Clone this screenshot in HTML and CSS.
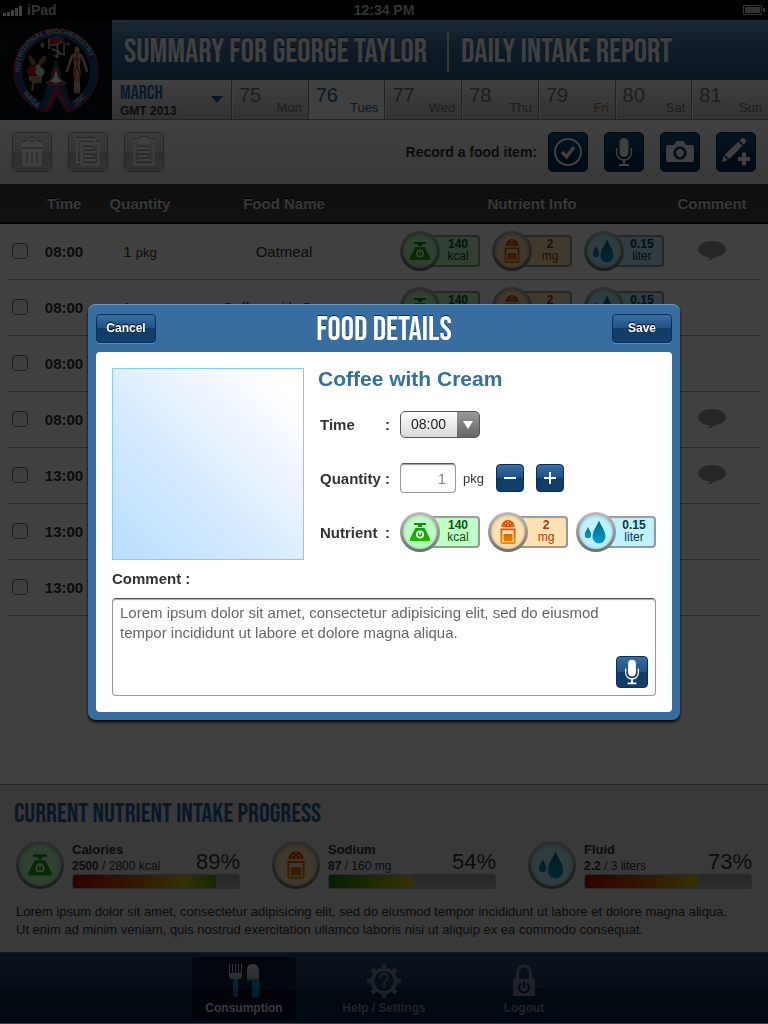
FILE: index.html
```html
<!DOCTYPE html>
<html lang="en">
<head>
<meta charset="utf-8">
<meta name="viewport" content="width=device-width, initial-scale=1">
<title>Daily Intake Report</title>
<link rel="stylesheet" href="styles.css">
</head>
<body>
<svg class="sprite" aria-hidden="true">
  <defs>
    <linearGradient id="g-green" x1="0" y1="0" x2="0" y2="1"><stop offset="0" stop-color="#0a8f0a"/><stop offset="1" stop-color="#1cb800"/></linearGradient>
    <linearGradient id="g-orange" x1="0" y1="0" x2="0" y2="1"><stop offset="0" stop-color="#e04e00"/><stop offset="1" stop-color="#f08c00"/></linearGradient>
    <linearGradient id="g-blue" x1="0" y1="0" x2="0" y2="1"><stop offset="0" stop-color="#006a86"/><stop offset="1" stop-color="#009bd0"/></linearGradient>
    <linearGradient id="g-cutlery" x1="0" y1="0" x2="0" y2="1"><stop offset="0" stop-color="#d8dde2"/><stop offset=".44" stop-color="#a8b4c0"/><stop offset=".46" stop-color="#1494bc"/><stop offset="1" stop-color="#0b7fb0"/></linearGradient>
  </defs>
  <symbol id="scale" viewBox="0 0 24 24">
    <path fill="url(#g-green)" d="M6 3h12v2h-4v2h-4V5H6zM7.500 8h9l5.500 10.500V21H2v-2.500z"/>
    <circle cx="12" cy="14.500" r="4" fill="#e8ffe8"/>
    <circle cx="12" cy="14.500" r="2.200" fill="#12a004"/><path fill="#e8ffe8" d="M11.300 11.500h1.400v3.500h-1.400z"/>
  </symbol>
  <symbol id="shaker" viewBox="0 0 24 26">
    <path fill="#e04e00" d="M5.500 8C5.500 4 8 1 12 1s6.500 3 6.500 7z"/>
    <g fill="#ffe2b4"><circle cx="12" cy="3" r=".8"/><circle cx="9.500" cy="4.600" r=".7"/><circle cx="14.500" cy="4.600" r=".7"/><circle cx="12" cy="6.200" r=".7"/><circle cx="8" cy="6.600" r=".6"/><circle cx="16" cy="6.600" r=".6"/></g>
    <path fill="url(#g-orange)" fill-rule="evenodd" d="M4.500 9.500h15V23.500a1.500 1.500 0 0 1-1.500 1.500H6a1.500 1.500 0 0 1-1.500-1.500zM6.300 11.300v11.900h11.400V11.300zM7.500 15h9v7h-9z"/>
  </symbol>
  <symbol id="drops" viewBox="0 0 24 24">
    <path fill="url(#g-blue)" d="M15 .500c2 5.500 6.500 10 6.500 16.500a6.500 6.500 0 0 1-13 0C8.500 10.500 13 6 15 .500z"/>
    <path fill="url(#g-blue)" d="M4 7c1 3 3.200 4.800 3.200 8a3.200 3.200 0 0 1-6.400 0C.8 11.800 3 10 4 7z"/>
  </symbol>
  <symbol id="mic" viewBox="0 0 20 30">
    <rect x="5.500" y="1" width="9" height="19" rx="4.500" fill="#fff"/>
    <path fill="none" stroke="#fff" stroke-width="1.500" d="M2.700 11v5c0 4 3 7 7.300 7s7.300-3 7.300-7v-5"/>
    <path fill="#fff" d="M9 23h2v4h4v2H5v-2h4z"/>
  </symbol>
  <symbol id="bubble" viewBox="0 0 28 22">
    <path fill="#999" d="M14 1c7.700 0 14 3.500 14 8.200 0 4-4.600 7.200-10.500 7.900C15 19 12 20.500 8.500 21c1.800-1.200 2.800-2.600 3-3.800C5 16.700 0 13.500 0 9.200 0 4.500 6.300 1 14 1z"/>
  </symbol>
</svg>

<div class="page">
  <div class="status">
    <span class="carrier">
      <svg width="20" height="11" viewBox="0 0 20 11" aria-hidden="true"><path fill="#fff" d="M0 8h3v3H0zM4 7h3v4H4zM8 5h3v6H8zM12 3h3v8h-3zM16 1h3v10h-3z"/></svg>
      iPad
    </span>
    <span class="clock">12:34 PM</span>
    <span class="battery">
      <svg width="22" height="10" viewBox="0 0 22 10" aria-hidden="true"><path fill="none" stroke="#ccc" d="M.500.500h18v9H.500z"/><path fill="#ccc" d="M2 2h15v6H2zM20 3h2v4h-2z"/></svg>
    </span>
  </div>

  <header class="top">
    <svg class="logo" viewBox="0 0 112 100" role="img" aria-label="Nutritional Biochemistry, NASA JSC">
      <rect width="112" height="100" fill="#0a0f14"/>
      <g fill="#7d8a94"><circle cx="8" cy="9" r=".6"/><circle cx="22" cy="6" r=".5"/><circle cx="96" cy="12" r=".6"/><circle cx="103" cy="30" r=".5"/><circle cx="6" cy="40" r=".5"/><circle cx="9" cy="78" r=".6"/><circle cx="20" cy="92" r=".5"/><circle cx="90" cy="92" r=".6"/><circle cx="104" cy="75" r=".6"/><circle cx="81" cy="5" r=".5"/><circle cx="107" cy="54" r=".5"/><circle cx="36" cy="11" r=".4"/><circle cx="5" cy="22" r=".4"/></g>
      <circle cx="56" cy="51" r="42" fill="#1d4a80" stroke="#b01c28" stroke-width="1.500"/>
      <circle cx="56" cy="51" r="34" fill="#000"/>
      <path fill="#0a0f14" d="M52 72h10l9 24H42z"/>
      <path fill="#1d4a80" d="M48 64h17l7 24H40z"/>
      <path fill="#0a0f14" d="M57 76l9 20H48z"/>
      <path fill="none" stroke="#c01c28" stroke-width="3.500" d="M45.500 92l11.500-24 11.500 24"/>
      <path fill="#c01c28" stroke="#3a6aa4" stroke-width="1.500" d="M56 42l3 10 1 6 6 5-5 2h-10l-5-2 6-5 1-6z"/>
      <path fill="#fff" d="M56 50l2 7 4 5h-4l-2 2-2-2h-4l4-5z"/>
      <path fill="#d01c24" d="M48 19c5-3 11-3 16 0v1c-3 6-12 6-16 0z"/>
      <path fill="none" stroke="#ccc" stroke-width="1.500" d="M49 19v10M49 25h8l1 9h5M57 25l5-4M64 22v14M52 29l9 4"/>
      <g stroke="#bbb" stroke-width="1"><path d="M40 25h5M42.500 22v6M41 23.500l3 3M44 23.500l-3 3M54 36h5M56.500 33.500v5M55 34.500l3 3M58 34.500l-3 3M66 24h4M68 22v4"/></g>
      <g fill="#8a7440"><ellipse cx="32" cy="41" rx="2.500" ry="6" transform="rotate(-28 32 41)"/><ellipse cx="42" cy="41" rx="2.500" ry="6" transform="rotate(35 42 41)"/></g>
      <path fill="#b08a50" d="M29 56h13v7H34v7l-3 1 1-9-3-2z"/>
      <circle cx="32" cy="51" r="5" fill="#c81824"/><circle cx="40" cy="52" r="4.500" fill="#d8d8c0"/><circle cx="38" cy="47" r="2.500" fill="#d8d8c0"/>
      <g fill="none" stroke="#d0a888" stroke-linecap="round" stroke-linejoin="round"><path stroke-width="2.500" d="M67 51l5-15 3-2h4l3 2 5 15"/><path stroke-width="3" d="M75.500 54v18M78.500 54v18"/></g>
      <path fill="#d0a888" d="M73 34h8l-1 12 1 9h-8l1-9z"/><ellipse cx="77" cy="30" rx="2.500" ry="3.500" fill="#d0a888"/>
      <path stroke="#c01c24" stroke-width="1" fill="none" d="M77 33v13M75 38l2 3 2-3M77 46l-2 5v10M77 46l2 5v10"/>
      <path id="arc-top" fill="none" d="M21 58a36 36 0 1 1 70 0"/>
      <g class="patch-text"><text><textPath href="#arc-top" startOffset="6">NUTRITIONAL BIOCHEMISTRY</textPath></text>
      <text transform="translate(23 74) rotate(46)">NASA</text><text transform="translate(76 86) rotate(-43)">JSC</text></g>
    </svg>
    <div class="top-main">
      <h1 class="title display"><span>Summary for George Taylor</span><span class="title-second">Daily Intake Report</span></h1>
      <nav class="dates">
        <button class="month" type="button">
          <span><span class="month-name display">March</span><span class="month-year">GMT 2013</span></span>
          <svg width="12" height="7" viewBox="0 0 12 7" aria-hidden="true"><path fill="#1d5b92" d="M0 0h12L6 7z"/></svg>
        </button>
        <a class="day" href="#d75"><b>75</b><span>Mon</span></a>
        <a class="day day-on" href="#d76"><b>76</b><span>Tues</span></a>
        <a class="day" href="#d77"><b>77</b><span>Wed</span></a>
        <a class="day" href="#d78"><b>78</b><span>Thu</span></a>
        <a class="day" href="#d79"><b>79</b><span>Fri</span></a>
        <a class="day" href="#d80"><b>80</b><span>Sat</span></a>
        <a class="day" href="#d81"><b>81</b><span>Sun</span></a>
      </nav>
    </div>
  </header>

  <div class="toolbar">
    <button class="tool tool-off" type="button" aria-label="Delete"><svg width="24" height="30" viewBox="0 0 24 30"><path fill="none" stroke="#fff" stroke-width="1.800" d="M8 5q0-3 2-3h4q2 0 2 3"/><path fill="#fff" d="M4 4.500h16q4 1 4 5.500H0q0-4.500 4-5.500z"/><path fill="#fff" fill-rule="evenodd" d="M2 11.500h20V28q0 1-1 1H3q-1 0-1-1zM6 15v11h2V15zM11 15v11h2V15zM16 15v11h2V15z"/></svg></button>
    <button class="tool tool-off" type="button" aria-label="Copy"><svg width="26" height="30" viewBox="0 0 26 30"><path fill="none" stroke="#fff" stroke-width="2" d="M5 25H2V2h18v3"/><path fill="none" stroke="#fff" stroke-width="2.500" d="M6.500 6.500h17v21h-17z"/><path stroke="#fff" stroke-width="2" d="M9 11h7M9 15h12M9 19h9M9 23h12"/></svg></button>
    <button class="tool tool-off" type="button" aria-label="Paste"><svg width="24" height="30" viewBox="0 0 24 30"><path fill="none" stroke="#fff" stroke-width="2.500" d="M5 3.500H2.500v24h19v-24H19"/><path fill="#fff" d="M6 2h3V0h6v2h3v5H6z"/><path stroke="#fff" stroke-width="2" d="M6 11h9M6 15h12M6 19h9M6 23h12"/></svg></button>
    <span class="record">Record a food item:</span>
    <button class="tool" type="button" aria-label="Check off"><svg width="30" height="30" viewBox="0 0 30 30"><circle cx="15" cy="15" r="13" fill="none" stroke="#fff" stroke-width="2"/><path fill="none" stroke="#fff" stroke-width="3.500" d="M9 15l4.500 4.500L21 10"/></svg></button>
    <button class="tool" type="button" aria-label="Record audio"><svg width="20" height="30"><use href="#mic"/></svg></button>
    <button class="tool" type="button" aria-label="Take photo"><svg width="28" height="22" viewBox="0 0 28 22"><path fill="#fff" fill-rule="evenodd" d="M2 4h6l2-4h8l2 4h6a2 2 0 0 1 2 2v13a2 2 0 0 1-2 2H2a2 2 0 0 1-2-2V6a2 2 0 0 1 2-2zM14 5.500a6.500 6.500 0 1 0 .01 0zM14 8a4 4 0 1 1-.01 0z"/></svg></button>
    <button class="tool" type="button" aria-label="Write entry"><svg width="28" height="30" viewBox="0 0 28 30"><path fill="#fff" d="M17.500 3.500L19 2q2-2 4 0t0 4l-1.500 1.500zM16.300 4.700l4 4L7.500 22l-5-4zM1.500 19l4.500 4-6 2zM20 15.500h4v4.500h4v4h-4v4.500h-4V24h-4v-4h4z"/></svg></button>
  </div>

  <main class="log">
    <table class="entries">
      <colgroup><col class="c-check"><col class="c-time"><col class="c-qty"><col class="c-food"><col class="c-info"><col class="c-note"></colgroup>
      <thead><tr><td></td><th class="time">Time</th><th>Quantity</th><th>Food Name</th><th>Nutrient Info</th><th class="note">Comment</th></tr></thead>
      <tbody>
        <tr><td class="check"><input type="checkbox" aria-label="Select 08:00 Oatmeal"></td><td class="time">08:00</td><td>1 <small>pkg</small></td><td>Oatmeal</td>
          <td><div class="pills">
            <span class="pill kcal"><span class="disc"><svg width="24" height="24"><use href="#scale"/></svg></span><span class="amount"><b>140</b><span>kcal</span></span></span>
            <span class="pill salt"><span class="disc"><svg width="24" height="26"><use href="#shaker"/></svg></span><span class="amount"><b>2</b><span>mg</span></span></span>
            <span class="pill water"><span class="disc"><svg width="24" height="24"><use href="#drops"/></svg></span><span class="amount"><b>0.15</b><span>liter</span></span></span>
          </div></td><td class="note"><svg width="28" height="22"><use href="#bubble"/></svg></td></tr>
        <tr><td class="check"><input type="checkbox" aria-label="Select 08:00 Coffee with Cream"></td><td class="time">08:00</td><td>1 <small>pkg</small></td><td>Coffee with Cream</td>
          <td><div class="pills">
            <span class="pill kcal"><span class="disc"><svg width="24" height="24"><use href="#scale"/></svg></span><span class="amount"><b>140</b></span></span>
            <span class="pill salt"><span class="disc"><svg width="24" height="26"><use href="#shaker"/></svg></span><span class="amount"><b>2</b></span></span>
            <span class="pill water"><span class="disc"><svg width="24" height="24"><use href="#drops"/></svg></span><span class="amount"><b>0.15</b></span></span>
          </div></td><td></td></tr>
        <tr><td class="check"><input type="checkbox" aria-label="Select entry 3"></td><td class="time">08:00</td><td></td><td></td><td></td><td></td></tr>
        <tr><td class="check"><input type="checkbox" aria-label="Select entry 4"></td><td class="time">08:00</td><td></td><td></td><td></td><td class="note"><svg width="28" height="22"><use href="#bubble"/></svg></td></tr>
        <tr><td class="check"><input type="checkbox" aria-label="Select entry 5"></td><td class="time">13:00</td><td></td><td></td><td></td><td class="note"><svg width="28" height="22"><use href="#bubble"/></svg></td></tr>
        <tr><td class="check"><input type="checkbox" aria-label="Select entry 6"></td><td class="time">13:00</td><td></td><td></td><td></td><td></td></tr>
        <tr><td class="check"><input type="checkbox" aria-label="Select entry 7"></td><td class="time">13:00</td><td></td><td></td><td></td><td></td></tr>
      </tbody>
    </table>
  </main>

  <section class="progress">
    <h2 class="display">Current Nutrient Intake Progress</h2>
    <div class="meters">
      <div class="meter kcal"><span class="disc disc-lg"><svg width="28" height="28"><use href="#scale"/></svg></span>
        <div class="meter-body"><div class="meter-text"><div><b class="meter-name">Calories</b><span><b>2500</b> / 2800 kcal</span></div><span class="percent">89%</span></div>
        <div class="track"><div class="fill fill-warm" style="width:86%"></div></div></div></div>
      <div class="meter salt"><span class="disc disc-lg"><svg width="28" height="30"><use href="#shaker"/></svg></span>
        <div class="meter-body"><div class="meter-text"><div><b class="meter-name">Sodium</b><span><b>87</b> / 160 mg</span></div><span class="percent">54%</span></div>
        <div class="track"><div class="fill fill-cool" style="width:50%"></div></div></div></div>
      <div class="meter water"><span class="disc disc-lg"><svg width="28" height="28"><use href="#drops"/></svg></span>
        <div class="meter-body"><div class="meter-text"><div><b class="meter-name">Fluid</b><span><b>2.2</b> / 3 liters</span></div><span class="percent">73%</span></div>
        <div class="track"><div class="fill fill-warm" style="width:68%"></div></div></div></div>
    </div>
    <p>Lorem ipsum dolor sit amet, consectetur adipisicing elit, sed do eiusmod tempor incididunt ut labore et dolore magna aliqua. Ut enim ad minim veniam, quis nostrud exercitation ullamco laboris nisi ut aliquip ex ea commodo consequat.</p>
  </section>

  <nav class="tabs">
    <a class="tab tab-on" href="#consumption"><svg width="30" height="34" viewBox="0 0 30 34" aria-hidden="true"><path fill="url(#g-cutlery)" d="M0 0h1v9h2V0h1v9h2V0h1v9h2V0h1v9h2V0h1v13q0 2-2 2H9v16q0 2-2.500 2T4 31V15H2q-2 0-2-2z"/><path fill="url(#g-cutlery)" d="M18 17V6q0-6 5-6 7 0 7 7v24q0 2-3.500 2T23 31V17z"/></svg>Consumption</a>
    <a class="tab" href="#help"><svg width="34" height="34" viewBox="0 0 34 34" aria-hidden="true"><circle cx="17" cy="17" r="11.500" fill="none" stroke="#7c8ba0" stroke-width="3.500"/><g stroke="#7c8ba0" stroke-width="4.500"><path d="M17 0v5M17 29v5M0 17h5M29 17h5M5 5l4 4M25 25l4 4M29 5l-4 4M9 25l-4 4"/></g><path fill="none" stroke="#7c8ba0" stroke-width="2" d="M13 14q0-4 4-4t4 3.500q0 2-2.500 3.500-1.500 1-1.500 3v1"/><path fill="#7c8ba0" d="M16 22.500h2.200v2.200H16z"/></svg>Help / Settings</a>
    <a class="tab" href="#logout"><svg width="24" height="34" viewBox="0 0 24 34" aria-hidden="true"><path fill="none" stroke="#7c8ba0" stroke-width="3" d="M5.500 16V8.500a6.500 6.500 0 0 1 13 0V16"/><path fill="#7c8ba0" d="M2 15h20q1 0 1 1v15q0 1-1 1H2q-1 0-1-1V16q0-1 1-1z"/><path fill="none" stroke="#12263e" stroke-width="2" d="M9 19.500a5 5 0 1 0 6 0M12 17.500v6"/></svg>Logout</a>
  </nav>
</div>

<div class="overlay">
  <form class="dialog" role="dialog" aria-labelledby="dialog-title">
    <div class="dialog-head">
      <button class="btn" type="button">Cancel</button>
      <h2 class="display" id="dialog-title">Food Details</h2>
      <button class="btn" type="button">Save</button>
    </div>
    <div class="dialog-body">
      <div class="details">
        <div class="photo"></div>
        <div class="fields">
          <h3>Coffee with Cream</h3>
          <div class="field"><label for="time"><span>Time</span><span>:</span></label>
            <span class="select"><select id="time"><option>08:00</option></select></span></div>
          <div class="field"><label for="qty"><span>Quantity</span><span>:</span></label>
            <input class="qty" id="qty" type="text" value="1"><span class="unit">pkg</span>
            <button class="btn step" type="button" aria-label="Decrease"><svg width="14" height="14"><path fill="#fff" d="M1 6h12v2H1z"/></svg></button>
            <button class="btn step" type="button" aria-label="Increase"><svg width="14" height="14"><path fill="#fff" d="M1 6h5V1h2v5h5v2H8v5H6V8H1z"/></svg></button></div>
          <div class="field"><div class="label"><span>Nutrient</span><span>:</span></div>
            <div class="pills pills-tight">
              <span class="pill kcal"><span class="disc"><svg width="24" height="24"><use href="#scale"/></svg></span><span class="amount"><b>140</b><span>kcal</span></span></span>
              <span class="pill salt"><span class="disc"><svg width="24" height="26"><use href="#shaker"/></svg></span><span class="amount"><b>2</b><span>mg</span></span></span>
              <span class="pill water"><span class="disc"><svg width="24" height="24"><use href="#drops"/></svg></span><span class="amount"><b>0.15</b><span>liter</span></span></span>
            </div></div>
        </div>
      </div>
      <label class="comment-label" for="comment">Comment :</label>
      <div class="comment"><textarea id="comment">Lorem ipsum dolor sit amet, consectetur adipisicing elit, sed do eiusmod tempor incididunt ut labore et dolore magna aliqua.</textarea>
        <button class="btn mic" type="button" aria-label="Dictate comment"><svg width="18" height="26"><use href="#mic"/></svg></button></div>
    </div>
  </form>
</div>
</body>
</html>
```

FILE: styles.css
```css
* { box-sizing: border-box; }

body {
  margin: 0;
  font-family: "Liberation Sans", Arial, sans-serif;
  color: #333;
  background: #fff;
}

button, input, select, textarea { font: inherit; color: inherit; margin: 0; }
button { padding: 0; cursor: pointer; }
a { color: inherit; text-decoration: none; }
h1, h2, h3, p { margin: 0; }
svg { display: block; }
.sprite { position: absolute; width: 0; height: 0; }

.display {
  font-family: "Bebas Neue", "Liberation Sans Narrow", "Roboto Condensed", "Liberation Sans", sans-serif;
  font-weight: normal;
  text-transform: uppercase;
}

.page { min-height: 100vh; display: flex; flex-direction: column; }

/* Status bar */
.status {
  height: 20px;
  padding: 0 3px;
  display: grid;
  grid-template-columns: 1fr auto 1fr;
  align-items: center;
  background: #000;
  color: #ccc;
  font-size: 14px;
  font-weight: bold;
}
.carrier { display: flex; align-items: center; gap: 4px; }
.battery { justify-self: end; }

/* Header */
.top { display: flex; height: 100px; }
.logo { width: 112px; flex: none; }
.patch-text { font-size: 7px; font-weight: bold; fill: #b8c4d0; }
.top-main { flex: 1; min-width: 0; display: flex; flex-direction: column; }
.title {
  height: 60px;
  padding: 2px 12px 0;
  display: flex;
  align-items: center;
  background: linear-gradient(#8ab0cf, #6594bc 2px, #3b6e9f 50%, #2b567f);
  border-top: 1px solid #7da8cc;
  color: #fff;
  font-size: 33px;
  white-space: nowrap;
  text-shadow: 0 -1px 1px #0d3360;
}
.title-second { margin-left: 20px; padding-left: 12px; border-left: 2px solid #ddd; line-height: 40px; }
.dates { flex: 1; display: flex; border-bottom: 1px solid #888; }
.month, .day {
  background: linear-gradient(#fff, #c4c4c4);
  border: 0;
  border-right: 1px solid #888;
}
.month {
  width: 120px;
  padding: 0 8px;
  display: flex;
  align-items: center;
  justify-content: space-between;
  text-align: left;
}
.month-name { display: block; color: #2a6aa8; font-size: 20px; line-height: 22px; }
.month-year { display: block; font-size: 12px; line-height: 14px; font-weight: bold; }
.day {
  flex: 1;
  padding: 4px 6px;
  display: flex;
  justify-content: space-between;
  color: #777;
  border-left: 1px solid #fff;
}
.day:last-child { border-right: 0; }
.day b { font-weight: normal; font-size: 20px; line-height: 22px; }
.day span { align-self: flex-end; font-size: 13px; line-height: 14px; }
.day-on { background: #fff; color: #2a6496; }

/* Toolbar */
.toolbar {
  height: 64px;
  padding: 0 12px;
  display: flex;
  align-items: center;
  gap: 16px;
  background: linear-gradient(#fff, #e0e0e0);
}
.tool {
  width: 40px;
  height: 40px;
  display: flex;
  align-items: center;
  justify-content: center;
  border: 1px solid #00284e;
  border-radius: 5px;
  background: linear-gradient(#1d4c7a, #0b3c68 50%, #002d54 50%, #003058);
}
.tool-off { border-color: #999; background: linear-gradient(#e8e8e8, #d0d0d0 50%, #bcbcbc 50%, #c8c8c8); }
.tool-off svg { filter: drop-shadow(0 -1px 0 #999); }
.record { margin-left: auto; margin-right: -5px; font-size: 14px; font-weight: bold; }

/* Entries */
.log { flex: 1; }
.entries { width: 100%; border-collapse: collapse; table-layout: fixed; text-align: center; font-size: 15px; }
.c-check { width: 40px; }
.c-time { width: 64px; }
.c-qty { width: 72px; }
.c-info { width: 280px; }
.c-note { width: 96px; }
.entries th, .entries td { padding: 0 0 2px; }
.entries thead tr {
  height: 40px;
  background: linear-gradient(#3c3c3c, #484848);
  color: #ddd;
  box-shadow: inset 0 -2px 0 #000;
  text-shadow: 0 -1px 0 #000;
}
.entries tbody tr {
  height: 56px;
  background: linear-gradient(#aaa, #aaa) center bottom / calc(100% - 16px) 1px no-repeat;
}
.entries small { font-size: 13px; }
.entries .time { padding-right: 16px; font-weight: bold; }
.entries .note { padding-right: 16px; }
.note svg { margin: 0 auto; }
.check input {
  appearance: none;
  display: block;
  width: 16px;
  height: 16px;
  margin-left: 12px;
  border: 1px solid #777;
  border-radius: 4px;
  background: linear-gradient(#eee, #fff);
}

/* Nutrient pills */
.pills { display: flex; justify-content: center; gap: 12px; }
.pills-tight { gap: 8px; }
.pill { display: flex; align-items: center; width: 80px; height: 40px; text-align: center; isolation: isolate; }
.disc {
  flex: none;
  z-index: 1;
  width: 40px;
  height: 40px;
  display: flex;
  align-items: center;
  justify-content: center;
  border: 3px solid transparent;
  border-radius: 50%;
  background: radial-gradient(var(--tint) 56%, var(--edge) 76%) padding-box, linear-gradient(#bdbdbd, #707070) border-box;
}
.disc-lg { width: 48px; height: 48px; }
.amount {
  flex: 1;
  height: 32px;
  margin-left: -8px;
  padding: 2px 0 0 6px;
  border: 1px solid #999;
  border-width: 1px 2px 2px 0;
  border-radius: 0 4px 4px 0;
  background: var(--tint);
  box-shadow: inset 0 1px 1px #999;
  color: var(--ink);
  font-size: 12px;
  line-height: 12px;
}
.amount > * { display: block; }
.kcal { --tint: #bfffc4; --edge: #9cdca4; --ink: #0c5020; }
.salt { --tint: #ffe2b4; --edge: #e4c08c; --ink: #a03c10; }
.water { --tint: #c0f1ff; --edge: #98d0e4; --ink: #0c3448; }

/* Progress */
.progress {
  height: 168px;
  padding: 17px 16px 0;
  border-top: 1px solid #999;
  background: #e2e2e2;
  isolation: isolate;
}
.progress h2 { margin-left: -2px; color: #2a6098; font-size: 27px; line-height: 24px; }
.meters { display: grid; grid-template-columns: repeat(3, 1fr); gap: 32px; margin-top: 15px; }
.meter { display: flex; align-items: center; gap: 8px; }
.meter-body { flex: 1; min-width: 0; }
.meter-text { display: flex; align-items: flex-end; justify-content: space-between; font-size: 12px; line-height: 16px; white-space: nowrap; }
.meter-name { display: block; font-size: 13px; }
.percent { font-size: 22px; line-height: 24px; }
.track { height: 15px; border: 1px solid #aaa; border-radius: 3px; background: linear-gradient(#999, #bbb); overflow: hidden; }
.fill { height: 100%; }
.fill-warm { background: linear-gradient(90deg, #c40000, #d07000 71px, #d0c800 110px, #3c9c00 150px); }
.fill-cool { background: linear-gradient(90deg, #148000, #d0c800 82px); }
.progress p { margin-top: 14px; padding-right: 12px; font-size: 13px; line-height: 18px; }

/* Tabs */
.tabs {
  height: 72px;
  display: flex;
  align-items: center;
  justify-content: center;
  gap: 36px;
  border-top: 1px solid #3b6ea0;
  background: linear-gradient(#2a4c6c, #183c60 50%, #042440 50%, #042c50);
}
.tab {
  width: 104px;
  height: 64px;
  padding-top: 7px;
  display: flex;
  flex-direction: column;
  align-items: center;
  gap: 3px;
  border-radius: 4px;
  color: #7c8ba0;
  font-size: 12px;
  line-height: 14px;
  font-weight: bold;
}
.tab-on { color: #ddd; background: linear-gradient(#0c1c34, #10203c 50%, #000c24 50%); }

/* Dialog */
.overlay {
  position: fixed;
  z-index: 10;
  inset: 0;
  display: flex;
  align-items: center;
  justify-content: center;
  padding: 16px;
  background: rgba(0, 0, 0, .75);
  box-shadow: inset 0 -1px 0 #1c4a80;
}
.dialog {
  width: 100%;
  max-width: 592px;
  padding: 0 8px 8px;
  border-radius: 8px;
  background: #386d9f;
  box-shadow: inset 0 1px 0 #6a9ac4, 0 2px 3px #000;
}
.dialog-head { height: 48px; display: flex; align-items: center; justify-content: space-between; }
.dialog-head h2 { padding-top: 4px; color: #fff; font-size: 33px; line-height: 40px; text-shadow: 0 -1px 0 #0a2c60; }
.btn {
  min-width: 60px;
  height: 29px;
  border: 1px solid #062f5a;
  border-radius: 4px;
  background: linear-gradient(#3a6ea0, #1f5084 50%, #103c66 50%, #123f6c);
  box-shadow: 0 1px 0 #5d8fbd;
  color: #fff;
  font-size: 12px;
  font-weight: bold;
  text-shadow: 0 -1px 1px #000;
}
.dialog-body { padding: 16px; border-radius: 4px; background: #fff; }
.details { display: flex; gap: 16px; }
.photo {
  flex: none;
  width: 192px;
  height: 192px;
  border: 1px solid #8ac8f8;
  background: linear-gradient(45deg, #b8deff, #d4eaff 40%, #f0f6ff 70%, #fff 90%);
}
.fields { flex: 1; }
.fields h3 { margin-left: -2px; padding-bottom: 7px; color: #336f9f; font-size: 21px; line-height: 22px; }
.field { height: 54px; display: flex; align-items: center; }
.field label, .field .label {
  width: 80px;
  padding-right: 10px;
  display: flex;
  justify-content: space-between;
  font-size: 15px;
  font-weight: bold;
}
.select { position: relative; }
.select select {
  appearance: none;
  width: 80px;
  height: 27px;
  padding: 0 0 0 10px;
  border: 1px solid #555;
  border-radius: 5px;
  background: linear-gradient(#999, #666) right / 22px 100% no-repeat, linear-gradient(#fff, #d8d8d8);
  color: #222;
  font-size: 14px;
}
.select::after {
  content: "";
  position: absolute;
  top: 10px;
  right: 7px;
  border: 5px solid transparent;
  border-top: 8px solid #fff;
  border-bottom: 0;
  pointer-events: none;
}
.qty {
  width: 56px;
  height: 30px;
  padding: 0 9px;
  border: 1px solid #999;
  border-top-color: #555;
  border-radius: 4px;
  box-shadow: inset 0 1px 1px #999;
  color: #888;
  font-size: 15px;
  text-align: right;
}
.unit { width: 40px; padding-left: 7px; font-size: 13px; }
.step { min-width: 28px; width: 28px; height: 28px; margin-right: 12px; display: grid; place-items: center; box-shadow: none; }
.comment-label { display: block; padding: 8px 0; font-size: 15px; line-height: 22px; font-weight: bold; }
.comment { position: relative; }
.comment textarea {
  display: block;
  width: 100%;
  height: 98px;
  padding: 4px 7px;
  resize: none;
  border: 1px solid #999;
  border-top-color: #555;
  border-radius: 4px;
  box-shadow: inset 0 1px 1px #aaa;
  color: #666;
  font-size: 15px;
  line-height: 20px;
}
.mic { position: absolute; right: 8px; bottom: 8px; min-width: 32px; width: 32px; height: 32px; display: grid; place-items: center; box-shadow: none; }
```
